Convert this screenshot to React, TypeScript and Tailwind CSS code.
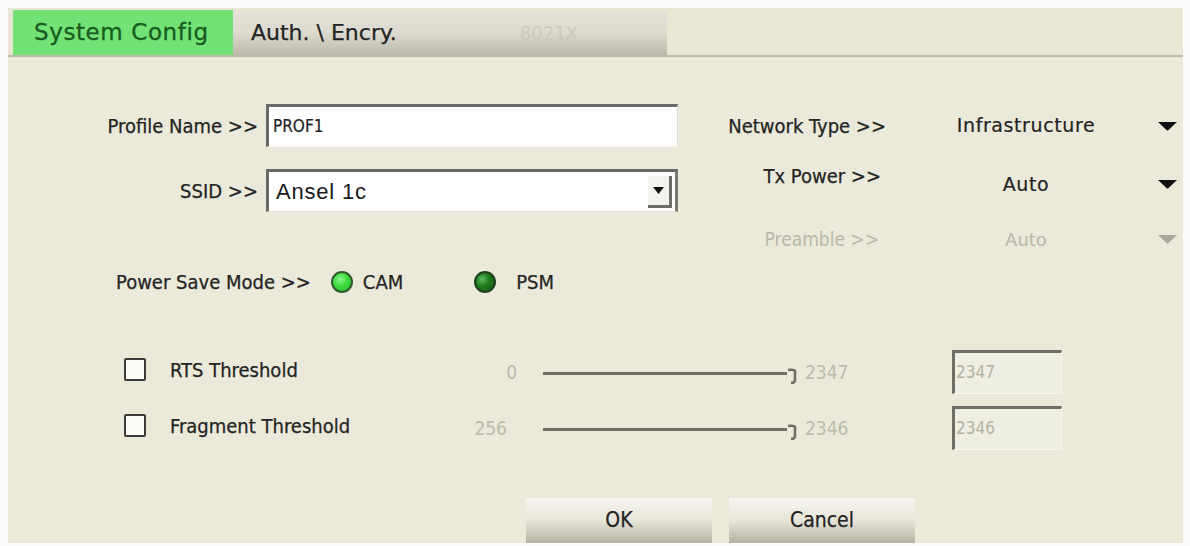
const cond = "font-['DejaVu_Sans_Condensed','DejaVu_Sans',sans-serif]";
const wide = "font-['DejaVu_Sans',sans-serif]";
const label = `text-[20px] text-[#242424] [-webkit-text-stroke:0.25px_#242424] ${cond}`;

function Arrow({ faded = false }: { faded?: boolean }) {
  return (
    <svg width="21" height="10" viewBox="0 0 21 10">
      <path d="M1 1 L20 1 L11.5 9 Q10.5 10 9.5 9 Z" fill={faded ? "#a9a79b" : "#111"} />
    </svg>
  );
}

function Radio({ on }: { on: boolean }) {
  return (
    <span
      className={
        on
          ? "w-[22px] h-[22px] rounded-full border-2 border-[#2f5a2f] bg-[radial-gradient(circle_at_40%_35%,#8bf58b_0%,#3ddc3d_45%,#22b522_100%)]"
          : "w-[22px] h-[22px] rounded-full border-2 border-[#1f3f1f] bg-[radial-gradient(circle_at_35%_35%,#5fbf5f_0%,#1f7d1f_40%,#145e14_100%)]"
      }
    />
  );
}

function Threshold({ name, min, max, minPad }: { name: string; min: string; max: string; minPad: string }) {
  return (
    <div className="flex items-center h-[44px]">
      <span className="ml-[116px] mb-[5px] w-[22px] h-[23px] bg-[#fbfbf8] border-2 border-[#3a3a3a] rounded-[2px]" />
      <span className={`ml-[24px] mb-[5px] w-[285px] ${label}`}>{name}</span>
      <span className={`w-[62px] text-right text-[19px] text-[#bdbbae] ${minPad} ${cond}`}>{min}</span>
      <div className="ml-[26px] flex items-center">
        <div className="w-[244px] h-[3px] bg-[#6f6d64] mt-[2px]" />
        <svg width="13" height="18" viewBox="0 0 13 18" className="mt-[8px]">
          <path d="M1 3 Q7 2 8 4 L8 13 Q8 16 4 16" stroke="#6f6d64" strokeWidth="2.5" fill="none" />
        </svg>
      </div>
      <span className={`ml-[5px] w-[147px] text-[19px] text-[#bdbbae] ${cond}`}>{max}</span>
      <div className={`w-[110px] h-[44px] bg-[#efeee3] border-t-[3px] border-l-[3px] border-r border-b border-t-[#6f6e66] border-l-[#6f6e66] border-r-[#f6f5ee] border-b-[#f6f5ee] flex items-center pl-[1px] text-[17px] text-[#b3b1a4] ${cond}`}>
        {max}
      </div>
    </div>
  );
}

export default function App() {
  return (
    <div className="w-[1190px] h-[546px] bg-[#fdfbfb] pt-[8px] pl-[8px] pr-[7px] pb-[3px]">
      <div className="w-full h-full bg-[#ebe9da] flex flex-col">
        {/* tabs */}
        <div className="flex pl-[5px] pt-[2px] bg-[#e8e6d5] border-b-2 border-[#bdbbac]">
          <div className={`w-[220px] h-[45px] bg-[#72e276] flex items-center pl-[21px] text-[23px] tracking-[0.6px] text-[#185a1f] [-webkit-text-stroke:0.3px_#185a1f] ${wide}`}>
            System Config
          </div>
          <div className="w-[434px] h-[45px] bg-gradient-to-b from-[#e4e2d8] via-[#dddbcf] to-[#bcbaab] flex items-center pl-[18px]">
            <span className={`text-[22px] text-[#232323] [-webkit-text-stroke:0.25px_#232323] ${wide}`}>Auth. \ Encry.</span>
            <span className={`ml-[123px] text-[20px] text-[#cbc9be] ${cond}`}>8021X</span>
          </div>
        </div>

        {/* top section */}
        <div className="flex mt-[47px]">
          <div className="w-[680px] flex flex-col">
            <div className="flex items-center h-[43px]">
              <span className={`w-[250px] text-right ${label}`}>Profile Name &gt;&gt;</span>
              <div className={`ml-[8px] w-[412px] h-[43px] bg-white border-t-[3px] border-l-[3px] border-r border-b border-t-[#6a6a66] border-l-[#6a6a66] border-r-[#dedcd2] border-b-[#f4f3ec] flex items-center pl-[4px] text-[17px] text-[#222] [-webkit-text-stroke:0.2px_#222] ${cond}`}>
                PROF1
              </div>
            </div>
            <div className="flex items-center h-[43px] mt-[22px]">
              <span className={`w-[250px] text-right ${label}`}>SSID &gt;&gt;</span>
              <div className="ml-[8px] w-[412px] h-[43px] bg-white border-t-[3px] border-l-[3px] border-r-[3px] border-b border-t-[#6a6a66] border-l-[#6a6a66] border-r-[#7a7972] border-b-[#e4e3da] flex items-center pl-[7px] pr-[3px]">
                <span className="flex-1 text-[22px] tracking-[0.8px] text-[#1a1a1a] font-['Liberation_Sans',Arial,sans-serif]">Ansel 1c</span>
                <div className="w-[24px] h-[32px] bg-[#f4f3ee] border-r-[3px] border-b-[3px] border-[#6e6d67] flex items-center justify-center">
                  <svg width="11" height="7" viewBox="0 0 11 7">
                    <path d="M0 0 L11 0 L5.5 7 Z" fill="#111" />
                  </svg>
                </div>
              </div>
            </div>
          </div>

          <div className="flex flex-col">
            <div className="flex items-center h-[43px]">
              <span className={`w-[198px] text-right ${label}`}>Network Type &gt;&gt;</span>
              <span className={`ml-[40px] w-[200px] text-center text-[19px] tracking-[0.6px] text-[#232323] [-webkit-text-stroke:0.2px_#232323] ${wide}`}>Infrastructure</span>
              <span className="ml-[31px] flex"><Arrow /></span>
            </div>
            <div className="flex items-center h-[40px] mt-[13px]">
              <span className={`w-[198px] pr-[5px] mb-[8px] text-right ${label}`}>Tx Power &gt;&gt;</span>
              <span className={`ml-[40px] mt-[8px] w-[200px] text-center text-[19px] tracking-[0.6px] text-[#232323] [-webkit-text-stroke:0.2px_#232323] ${wide}`}>Auto</span>
              <span className="ml-[31px] mt-[8px] flex"><Arrow /></span>
            </div>
            <div className="flex items-center h-[40px] mt-[19px]">
              <span className={`w-[198px] pr-[7px] text-right text-[19px] text-[#b9b7aa] ${cond}`}>Preamble &gt;&gt;</span>
              <span className={`ml-[40px] w-[200px] text-center text-[18px] text-[#b9b7aa] ${wide}`}>Auto</span>
              <span className="ml-[31px] flex"><Arrow faded /></span>
            </div>
          </div>
        </div>

        {/* power save */}
        <div className="flex items-center h-[30px] mt-[8px] pl-[108px]">
          <span className={label}>Power Save Mode &gt;&gt;</span>
          <span className="ml-[20px] flex"><Radio on /></span>
          <span className={`ml-[10px] ${label}`}>CAM</span>
          <span className="ml-[71px] flex"><Radio on={false} /></span>
          <span className={`ml-[20px] ${label}`}>PSM</span>
        </div>

        {/* thresholds */}
        <div className="mt-[53px] flex flex-col gap-[12px]">
          <Threshold name="RTS Threshold" min="0" max="2347" minPad="pr-0" />
          <Threshold name="Fragment Threshold" min="256" max="2346" minPad="pr-[10px]" />
        </div>

        {/* buttons */}
        <div className="flex gap-[17px] mt-[48px] pl-[518px]">
          <button className={`w-[186px] h-[45px] bg-gradient-to-b from-[#f7f6f0] via-[#e7e5d8] to-[#b4b2a1] ${label} text-[21px]`}>
            OK
          </button>
          <button className={`w-[186px] h-[45px] bg-gradient-to-b from-[#f7f6f0] via-[#e7e5d8] to-[#b4b2a1] ${label} text-[21px]`}>
            Cancel
          </button>
        </div>
      </div>
    </div>
  );
}
